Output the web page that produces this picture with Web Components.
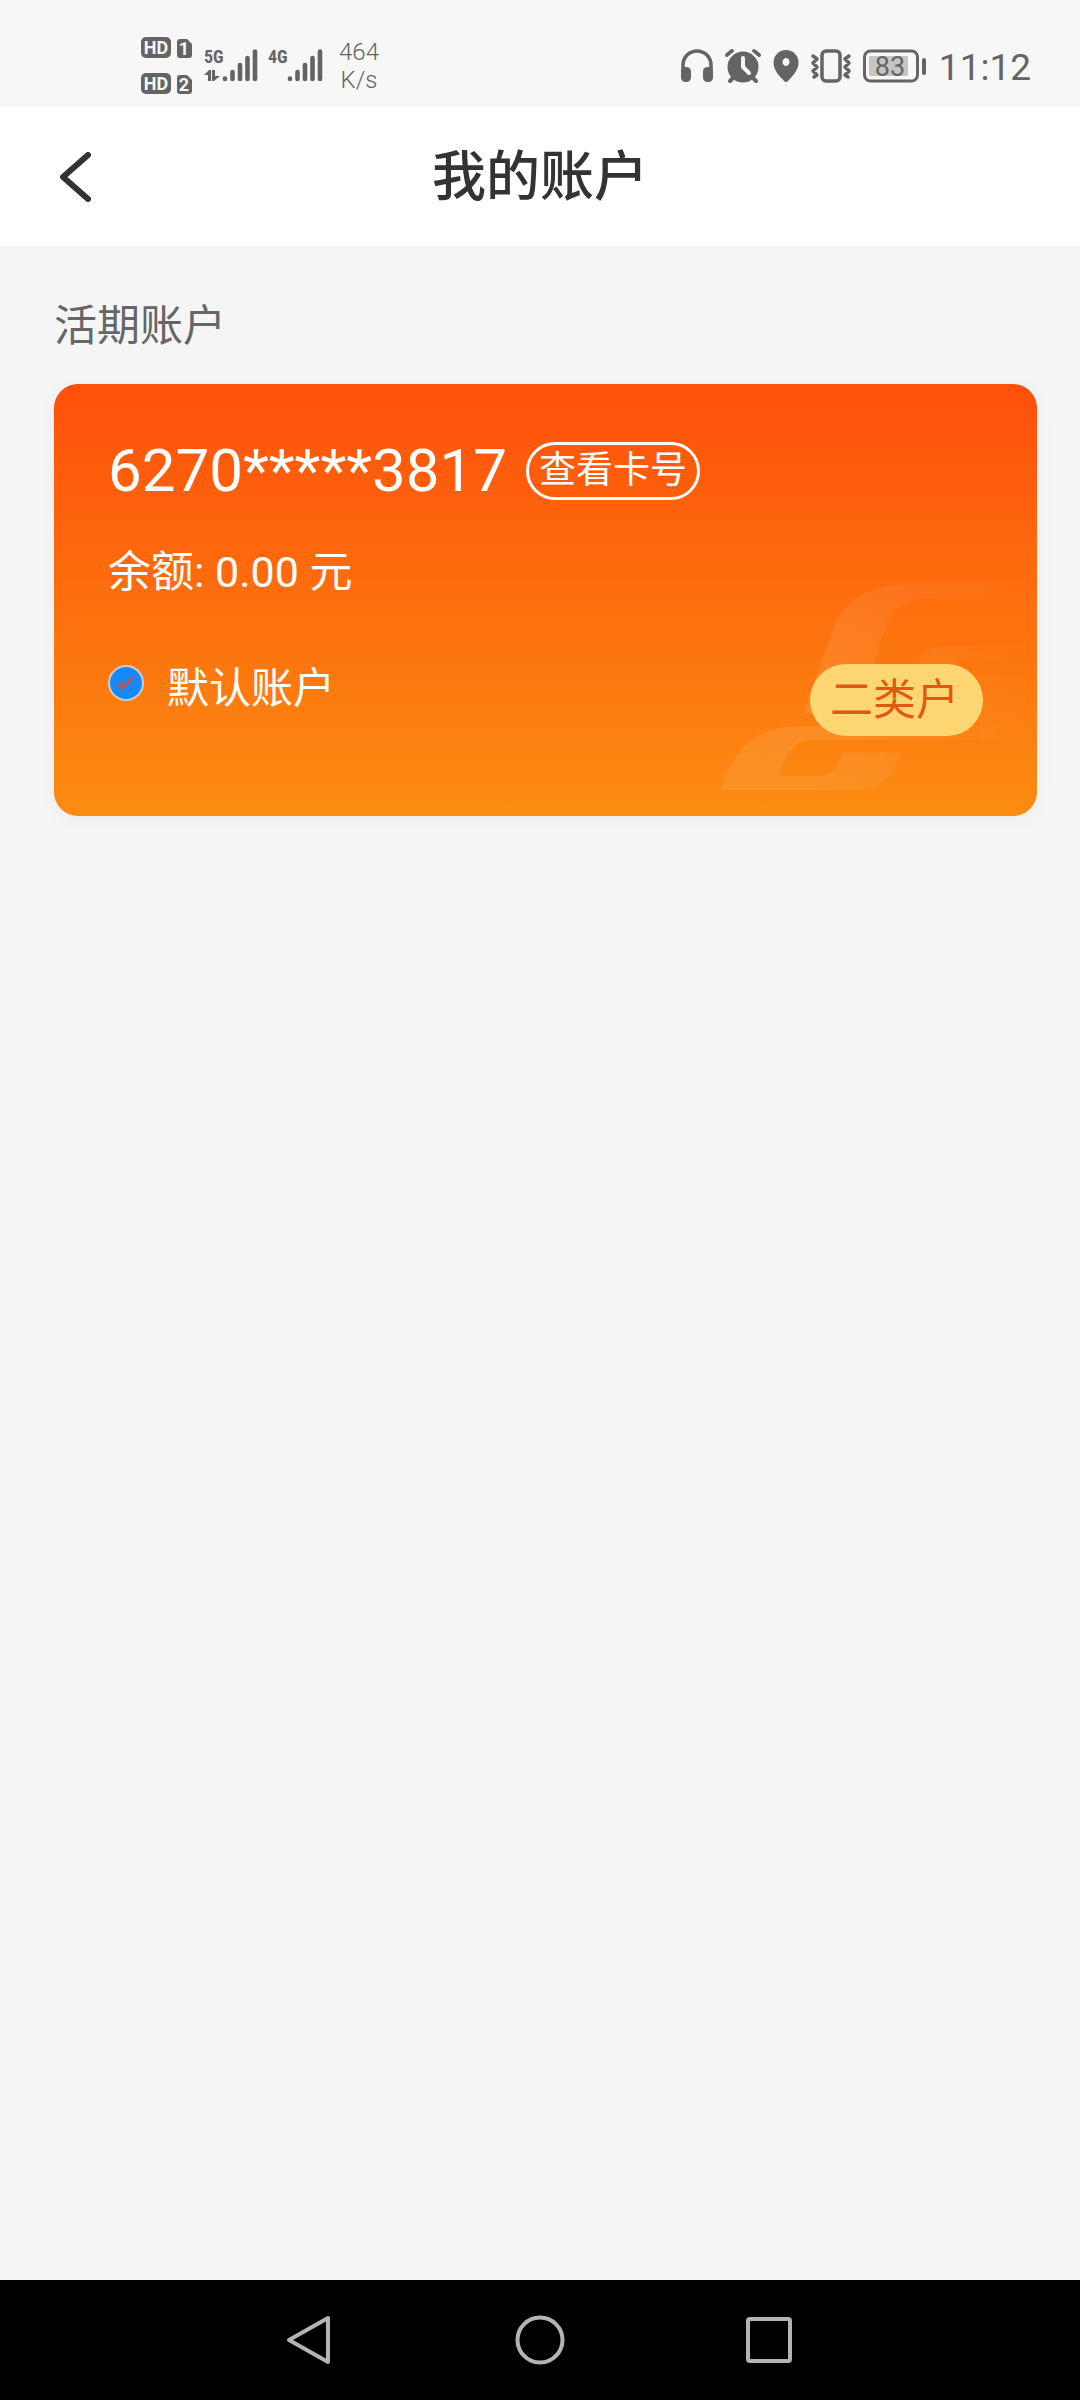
<!DOCTYPE html>
<html lang="zh-CN">
<head>
<meta charset="utf-8">
<meta name="viewport" content="width=device-width">
<title>我的账户</title>
<style>
body { margin: 0; background: #f5f5f5; font-family: Roboto, "Noto Sans CJK SC", sans-serif; }
</style>
</head>
<body>
<account-app></account-app>
<script>
const define = (name, html) => {
  const template = document.createElement('template');
  template.innerHTML = html;
  customElements.define(name, class extends HTMLElement {
    constructor() {
      super();
      this.attachShadow({ mode: 'open' }).append(template.content.cloneNode(true));
    }
  });
};

define('status-bar', `
<style>
:host { display: flex; justify-content: space-between; align-items: center; box-sizing: border-box; height: 107px; padding: 24px 49px 0 141px; background: #f7f7f7; color: #646464; }
.group { display: flex; align-items: center; gap: 10px; }
.group.right { gap: 12px; }
svg { display: block; fill: #646464; overflow: visible; }
.speed { font-size: 24px; line-height: 28px; text-align: center; margin-left: 6px; font-weight: 300; }
.time { font-size: 37px; line-height: 40px; padding-top: 4px; }
text { font-family: Roboto, sans-serif; }
.net { font-family: "Liberation Sans Narrow", "Roboto Condensed", Roboto, sans-serif; }
</style>
<div class="group">
  <svg width="53" height="58" viewBox="0 0 53 58">
    <rect width="30" height="21" rx="5"/><rect y="36" width="30" height="21" rx="5"/>
    <path d="M39 2h7l5 5v11q0 3-3 3h-9q-3 0-3-3V5q0-3 3-3zM39 38h7l5 5v11q0 3-3 3h-9q-3 0-3-3V41q0-3 3-3z"/>
    <g fill="#f7f7f7" font-size="18" font-weight="700" text-anchor="middle">
      <text x="15" y="17">HD</text><text x="15" y="53">HD</text>
      <text x="43" y="18">1</text><text x="43" y="54">2</text>
    </g>
  </svg>
  <svg width="54" height="38" viewBox="0 -1 54 38">
    <text class="net" x="0" y="15" font-size="18" font-weight="700">5G</text>
    <g stroke="#646464" stroke-width="4.6" stroke-linecap="round"><path d="M21 30.500v.5M28.500 24v7M36 17v14M43.500 10v21M51 3.500v27.500"/></g>
    <path d="M0 27l5-5h2v11H4v-6zM8 22h3v6h5l-6 5H8z"/>
  </svg>
  <svg width="55" height="38" viewBox="0 -1 55 38">
    <text class="net" x="0" y="15" font-size="18" font-weight="700">4G</text>
    <g stroke="#646464" stroke-width="4.6" stroke-linecap="round"><path d="M22 30.500v.5M29.500 24v7M37 17v14M44.500 10v21M52 3.500v27.500"/></g>
  </svg>
  <div class="speed">464<br>K/s</div>
</div>
<div class="group right">
  <svg width="32" height="34" viewBox="0 0 32 34">
    <path d="M2 27V16a14 14 0 0 1 28 0v11" fill="none" stroke="#646464" stroke-width="3.500"/>
    <rect x="0" y="18" width="10" height="15" rx="4.500"/><rect x="22" y="18" width="10" height="15" rx="4.500"/>
  </svg>
  <svg width="36" height="34" viewBox="0 0 36 34">
    <circle cx="18" cy="18" r="15.500"/>
    <path d="M2 6l5-4M29 2l5 4M5 32l3-3M31 32l-3-3" stroke="#646464" stroke-width="4" stroke-linecap="round"/>
    <path d="M2 10L11 2M34 10L25 2" stroke="#f7f7f7" stroke-width="2"/>
    <path d="M18 9v9l6 6" fill="none" stroke="#f7f7f7" stroke-width="4" stroke-linecap="round" stroke-linejoin="round"/>
  </svg>
  <svg width="26" height="34" viewBox="0 0 26 34">
    <path fill-rule="evenodd" d="M13 1C6 1 .5 6.500.5 13.500c0 8 6 13.500 10.500 18.500q2 2 4 0c4.500-5 10.500-10.500 10.500-18.500C25.500 6.500 20 1 13 1zm0 8c2 0 3.500 2 3.500 4s-1.500 4-3.500 4-3.500-2-3.500-4 1.500-4 3.500-4z"/>
  </svg>
  <svg width="40" height="34" viewBox="0 0 40 34">
    <g fill="none" stroke="#646464" stroke-width="3.500" stroke-linejoin="round" stroke-linecap="round"><rect x="11" y="2" width="18" height="30" rx="4"/>
    <path d="M2 7l4 3-4 4 4 4-4 4 4 4-3 2M38 7l-4 3 4 4-4 4 4 4-4 4 3 2"/></g>
  </svg>
  <svg width="64" height="34" viewBox="0 0 64 34">
    <rect x="1.500" y="2" width="53" height="30" rx="6" fill="none" stroke="#646464" stroke-width="3"/>
    <rect x="6" y="7" width="39" height="20" rx="1" fill="#c5c5c5"/>
    <rect x="59" y="9" width="4" height="17" rx="2"/>
    <text x="27" y="27" font-size="27" text-anchor="middle">83</text>
  </svg>
  <time class="time">11:12</time>
</div>`);

define('page-header', `
<style>
:host { display: grid; grid-template-columns: 150px 1fr 150px; align-items: center; height: 139px; background: #fff; color: #333; }
button { display: flex; align-items: center; height: 100%; padding: 0 0 0 60px; border: 0; background: none; }
h1 { margin: 0; padding-top: 2px; font-size: 54px; line-height: 64px; font-weight: 500; text-align: center; }
</style>
<button aria-label="返回"><svg width="32" height="50" viewBox="0 0 32 50" fill="none" stroke="#333" stroke-width="6" stroke-linecap="round" stroke-linejoin="round"><path d="M28 3L3 25l25 22"/></svg></button>
<h1><slot></slot></h1>`);

define('account-section', `
<style>
:host { display: block; padding: 50px 43px 48px 54px; }
h2 { margin: 0 0 28px; font-size: 43px; line-height: 60px; font-weight: 400; color: #666; }
</style>
<h2><slot name="title"></slot></h2>
<slot></slot>`);

define('default-check', `
<style>
:host { display: block; }
label { display: flex; align-items: flex-start; gap: 23px; font-size: 42px; line-height: 50px; }
input { appearance: none; box-sizing: border-box; width: 36px; height: 36px; margin: 1px 0 0; border: 2px solid #ccc; border-radius: 50%; background: #fff; }
input:checked { background: #1989fa; }
input:checked::before { content: ""; display: block; width: 32px; height: 32px; background: #b8565a; clip-path: polygon(20% 49%, 31% 50%, 38% 56%, 70% 30%, 77% 34%, 41% 70%, 34% 69%); }
</style>
<label><input type="checkbox" checked><span><slot></slot></span></label>`);

define('account-card', `
<style>
:host { display: flex; flex-direction: column; position: relative; padding: 52px 54px 80px; border-radius: 24px; background: linear-gradient(#ff500b, #fb8c11); box-shadow: 0 4px 20px rgba(0,0,0,.04); color: #fff; }
.mark { position: absolute; right: 0; bottom: 0; }
.number { display: flex; align-items: center; gap: 19px; height: 70px; font-size: 60px; line-height: 70px; }
button { box-sizing: border-box; height: 58px; padding: 0 10px; border: 3px solid #fff; border-radius: 29px; background: none; color: inherit; font-family: inherit; font-size: 37px; line-height: 50px; }
.balance { margin-top: 36px; font-size: 43px; line-height: 60px; }
.foot { display: flex; justify-content: space-between; align-items: flex-start; margin-top: 62px; }
.tag { position: relative; padding: 0 24px 0 20px; border-radius: 36px; background: #ffd772; color: #df5a10; font-size: 43px; line-height: 72px; }
</style>
<svg class="mark" width="317" height="233" viewBox="120 129 951 699" aria-hidden="true">
  <defs><linearGradient id="fade" gradientUnits="userSpaceOnUse" x1="400" y1="0" x2="1060" y2="0"><stop stop-color="#fff" stop-opacity=".09"/><stop offset="1" stop-color="#fff" stop-opacity="0"/></linearGradient></defs>
  <g fill="url(#fade)">
    <path d="M1071 132H690C560 132 480 190 455 280L370 520H530L590 350C620 240 640 174 750 174H1071z"/>
    <path d="M1071 316H830C770 316 735 330 715 362L700 408H800C820 375 840 356 880 356H1071z"/>
    <path d="M1071 408H900V600H940Q1020 595 1071 550z"/>
    <path d="M122 750C160 630 220 559 360 559H940V600H390C340 600 315 650 296 708H410C460 708 475 680 488 637H662C640 700 610 750 530 750z"/>
  </g>
</svg>
<div class="number"><slot name="number"></slot><button>查看卡号</button></div>
<div class="balance"><slot name="balance"></slot></div>
<div class="foot"><default-check>默认账户</default-check><span class="tag"><slot name="type"></slot></span></div>`);

define('system-nav', `
<style>
:host { display: flex; justify-content: center; height: 120px; background: #000; }
button { display: flex; align-items: center; justify-content: center; width: 230px; padding: 0; border: 0; background: none; }
svg { fill: none; stroke: #b4b4b4; stroke-width: 4; stroke-linejoin: round; }
</style>
<button aria-label="返回"><svg width="50" height="50"><path d="M4 25L43 3V47z"/></svg></button>
<button aria-label="主页"><svg width="50" height="50"><circle cx="25" cy="25" r="22.500"/></svg></button>
<button aria-label="最近任务"><svg width="50" height="50"><rect x="3" y="4" width="42" height="42" rx="2"/></svg></button>`);

define('account-app', `
<style>
:host { display: flex; flex-direction: column; min-height: 100vh; }
main { flex: 1; }
</style>
<status-bar></status-bar>
<page-header>我的账户</page-header>
<main>
  <account-section>
    <span slot="title">活期账户</span>
    <account-card>
      <span slot="number">6270*****3817</span>
      <span slot="balance">余额: 0.00 元</span>
      <span slot="type">二类户</span>
    </account-card>
  </account-section>
</main>
<system-nav></system-nav>`);
</script>
</body>
</html>
